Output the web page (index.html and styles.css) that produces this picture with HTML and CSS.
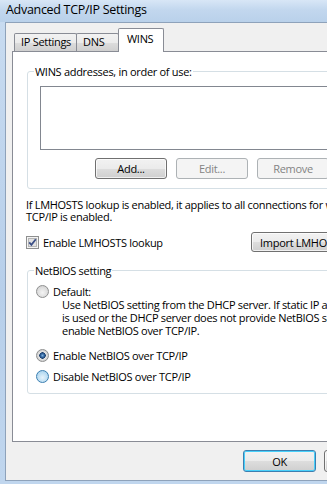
FILE: index.html
```html
<!DOCTYPE html>
<html lang="en">

<head>
    <meta charset="UTF-8">
    <meta name="viewport" content="width=device-width, initial-scale=1.0">
    <title>Advanced TCP/IP Settings</title>
    <link rel="stylesheet" href="styles.css">
</head>

<body>
    <div class="window">
        <div class="titlebar">Advanced TCP/IP Settings</div>

        <div class="client">
            <div class="tabs">
                <div class="tab">IP Settings</div>
                <div class="tab">DNS</div>
                <div class="tab active">WINS</div>
            </div>

            <div class="panel">
                <fieldset class="group wins-group">
                    <legend>WINS addresses, in order of use:</legend>
                    <div class="listbox"></div>
                    <div class="btn-row">
                        <button class="btn">Add...</button>
                        <button class="btn" disabled>Edit...</button>
                        <button class="btn" disabled>Remove</button>
                    </div>
                </fieldset>

                <p class="note">If LMHOSTS lookup is enabled, it applies to all connections for which<br>TCP/IP is enabled.</p>

                <div class="lmhosts-row">
                    <label class="check-label">
                        <span class="checkbox">
                            <svg width="13" height="13" viewBox="0 0 13 13">
                                <rect x="0.5" y="0.5" width="12" height="12" fill="#f4f4f4" stroke="#8e8f8f"/>
                                <rect x="2.5" y="2.5" width="8" height="8" fill="#e2e2e2" stroke="#b6b6b6"/>
                                <path d="M3.2 6.4 L5.4 8.8 L9.8 3.2" fill="none" stroke="#3b4f86" stroke-width="1.8"/>
                            </svg>
                        </span>
                        Enable LMHOSTS lookup
                    </label>
                    <button class="btn btn-import">Import LMHOSTS...</button>
                </div>

                <fieldset class="group netbios-group">
                    <legend>NetBIOS setting</legend>
                    <label class="radio-label first">
                        <span class="radio"></span>
                        Default:
                    </label>
                    <p class="radio-desc">Use NetBIOS setting from the DHCP server. If static IP address<br>is used or the DHCP server does not provide NetBIOS setting,<br>enable NetBIOS over TCP/IP.</p>
                    <label class="radio-label spaced">
                        <span class="radio checked"></span>
                        Enable NetBIOS over TCP/IP
                    </label>
                    <label class="radio-label">
                        <span class="radio hover"></span>
                        Disable NetBIOS over TCP/IP
                    </label>
                </fieldset>
            </div>

            <div class="dialog-buttons">
                <button class="btn btn-default">OK</button>
                <button class="btn">Cancel</button>
            </div>
        </div>
    </div>
</body>

</html>
```

FILE: styles.css
```css
body {
    margin: 0;
    overflow: hidden;
    font-family: 'Open Sans', 'DejaVu Sans', sans-serif;
    font-size: 11px;
    letter-spacing: -0.3px;
    color: #000;
    background: #c0d6ee;
}

.window {
    width: 327px;
    height: 484px;
    overflow: hidden;
    background: linear-gradient(180deg, #c9dcf1, #b7cfea 60%, #c0d6ee);
}

.titlebar {
    height: 22px;
    line-height: 20px;
    padding-left: 6px;
    font-size: 12.5px;
    white-space: nowrap;
    background: linear-gradient(180deg, #d8e6f6, #c2d7ee 45%, #b9d1ea);
}

.client {
    width: 420px;
    height: 457px;
    margin-left: 5px;
    border: 1px solid #8ea2ba;
    border-right: none;
    background-color: #f0f0f0;
}

/* tabs */

.tabs {
    display: flex;
    align-items: flex-end;
    height: 28px;
    padding-left: 8px;
}

.tab {
    box-sizing: border-box;
    height: 18px;
    line-height: 16px;
    padding-left: 6px;
    border: 1px solid #898c95;
    border-bottom: none;
    border-radius: 2px 2px 0 0;
    background: linear-gradient(180deg, #f2f2f2, #ebebeb 50%, #dddddd 51%, #cfcfcf);
    white-space: nowrap;
}

.tab:nth-child(1) {
    width: 63px;
}

.tab:nth-child(2) {
    width: 43px;
    margin-left: -1px;
}

.tab.active {
    position: relative;
    width: 46px;
    height: 24px;
    line-height: 20px;
    margin-left: -1px;
    margin-bottom: -1px;
    padding-left: 8px;
    background: #fff;
}

.panel {
    box-sizing: border-box;
    width: 400px;
    height: 391px;
    margin-left: 6px;
    padding-left: 13px;
    border: 1px solid #898c95;
    background: #fff;
}

/* group boxes */

.group {
    margin: 0 0 0 1px;
    border: 1px solid #d5dfe5;
    border-radius: 3px;
    padding: 0;
}

.group legend {
    padding: 0 1px;
    margin-left: 6px;
    line-height: 13px;
}

.wins-group {
    margin-top: 13px;
    padding-bottom: 9px;
}

.listbox {
    width: 340px;
    height: 64px;
    margin: 8px 0 0 12px;
    box-sizing: border-box;
    border: 1px solid #828790;
    background: #fff;
}

.btn-row {
    display: flex;
    gap: 9px;
    margin: 8px 0 0 67px;
}

.btn {
    box-sizing: border-box;
    width: 72px;
    height: 21px;
    padding: 0;
    font-family: inherit;
    font-size: 11px;
    letter-spacing: inherit;
    color: #000;
    border: 1px solid #707070;
    border-radius: 3px;
    background: linear-gradient(180deg, #f2f2f2, #ebebeb 50%, #dddddd 51%, #cfcfcf);
    box-shadow: inset 0 0 0 1px rgba(255, 255, 255, 0.7);
    white-space: nowrap;
}

.btn:disabled {
    color: #838383;
    border-color: #adb2b5;
    background: #f4f4f4;
    box-shadow: none;
}

.note {
    margin: 10px 0 0;
    line-height: 12px;
    white-space: nowrap;
}

.lmhosts-row {
    display: flex;
    align-items: center;
    height: 20px;
    margin-top: 9px;
}

.check-label {
    display: flex;
    align-items: center;
    gap: 4px;
    width: 225px;
    white-space: nowrap;
}

.checkbox {
    display: flex;
    width: 13px;
    height: 13px;
}

.btn-import {
    width: 110px;
    height: 20px;
}

.netbios-group {
    margin-top: 12px;
    padding: 0 0 10px 8px;
}

.netbios-group legend {
    margin-left: -2px;
}

.radio-label {
    display: flex;
    align-items: center;
    gap: 4px;
    height: 13px;
    margin-top: 8px;
    white-space: nowrap;
}

.radio-label.spaced {
    margin-top: 12px;
}

.radio {
    box-sizing: border-box;
    width: 13px;
    height: 13px;
    border-radius: 50%;
    border: 1px solid #8e8f8f;
    background: radial-gradient(circle at 50% 60%, #f4f4f4 0, #dcdcdc 60%, #c9c9c9 100%);
}

.radio.checked {
    background: radial-gradient(circle closest-side, #7fb0de 0, #2d5f98 35%, #1d3f6b 55%, #e6e6e6 62%, #d0d0d0 100%);
}

.radio.hover {
    border-color: #3c7fb1;
    background: radial-gradient(circle at 50% 60%, #e6f3fb 0, #b9dcf2 60%, #9cc8e8 100%);
}

.radio-desc {
    margin: 0 0 0 26px;
    line-height: 13px;
    white-space: nowrap;
}

/* bottom buttons */

.dialog-buttons {
    display: flex;
    gap: 8px;
    margin: 8px 0 0 237px;
}

.dialog-buttons .btn {
    width: 73px;
    height: 22px;
}

.btn-default {
    border-color: #3c7fb1;
    box-shadow: inset 0 0 0 1px #48d0fa;
}
```
